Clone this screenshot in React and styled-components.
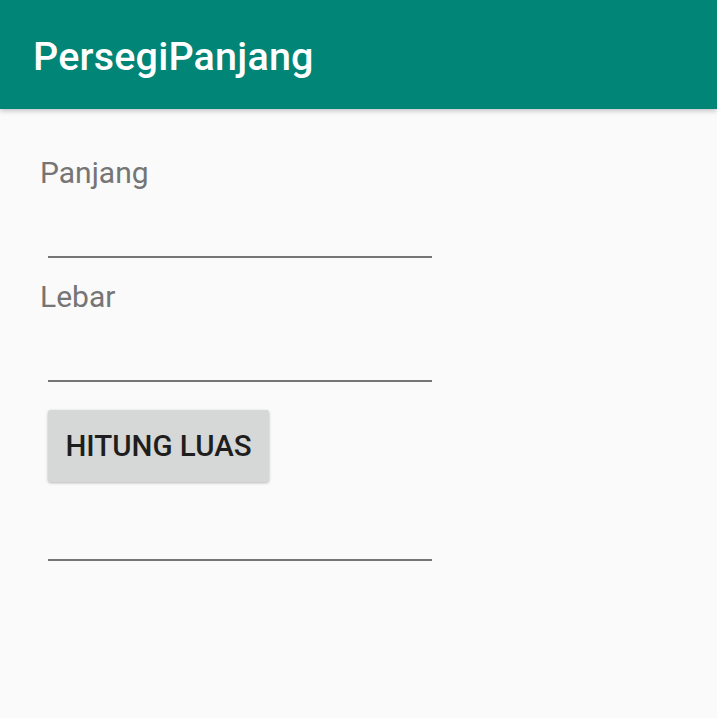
import React from 'react';
import styled, { createGlobalStyle } from 'styled-components';

const GlobalStyle = createGlobalStyle`
  html, body {
    margin: 0;
    padding: 0;
    background: #fafafa;
  }
  body {
    font-family: Roboto, "Liberation Sans", sans-serif;
  }
`;

const Screen = styled.div`
  width: 717px;
  height: 718px;
  background: #fafafa;
  overflow: hidden;
`;

const Toolbar = styled.header`
  height: 109px;
  background: #008577;
  display: flex;
  align-items: center;
  padding: 4px 0 0 33px;
  box-sizing: border-box;
  box-shadow: 0 2px 5px rgba(0, 0, 0, 0.22);
  position: relative;
`;

const Title = styled.h1`
  margin: 0;
  color: #ffffff;
  font-size: 39.5px;
  font-weight: 500;
  letter-spacing: 0.2px;
`;

const Content = styled.main`
  display: flex;
  flex-direction: column;
  align-items: flex-start;
  padding: 47px 40px 0 40px;
`;

const Label = styled.div`
  font-size: 30px;
  line-height: 34px;
  color: #757575;
  margin-top: ${(p) => p.$gap || 0}px;
`;

const Field = styled.div`
  margin-left: 8px;
  width: 384px;
  height: ${(p) => p.$height}px;
  border-bottom: 2px solid #757575;
`;

const Button = styled.button`
  margin: 28px 0 0 8px;
  width: 221px;
  height: 72px;
  border: none;
  border-radius: 3px;
  background: #d6d7d7;
  box-shadow: 0 1px 3px rgba(0, 0, 0, 0.28);
  color: #1e1e1e;
  font-family: Roboto, "Liberation Sans", sans-serif;
  font-size: 29.5px;
  font-weight: 500;
  padding: 0;
`;

export default function App() {
  return (
    <>
      <GlobalStyle />
      <Screen>
        <Toolbar>
          <Title>PersegiPanjang</Title>
        </Toolbar>
        <Content>
          <Label>Panjang</Label>
          <Field $height={66} />
          <Label $gap={22}>Lebar</Label>
          <Field $height={66} />
          <Button>HITUNG LUAS</Button>
          <Field $height={77} />
        </Content>
      </Screen>
    </>
  );
}
